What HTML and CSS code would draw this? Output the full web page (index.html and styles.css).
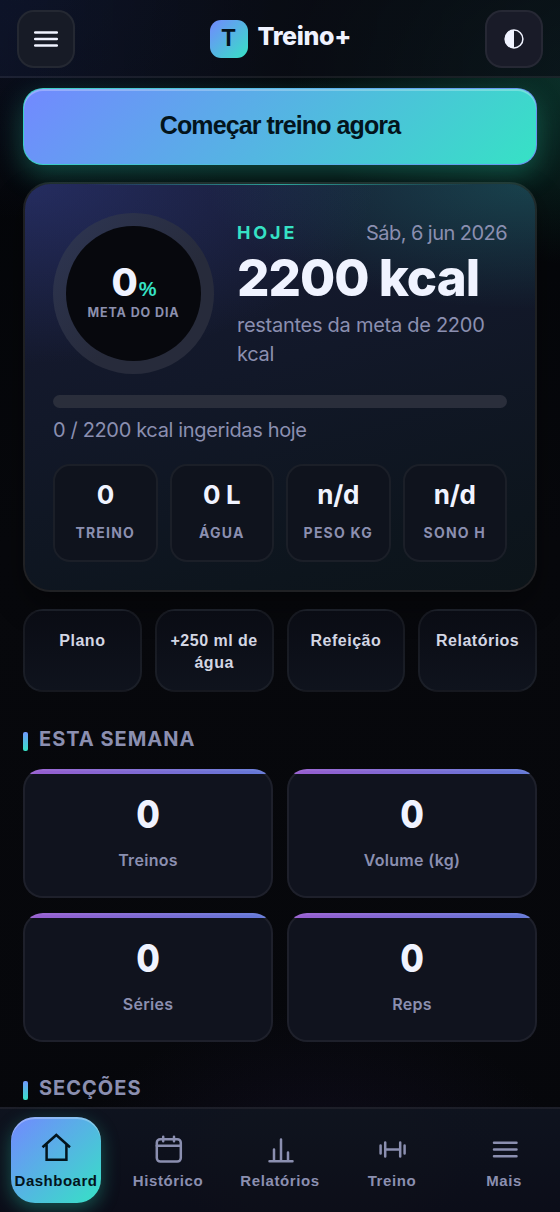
FILE: index.html
```html
<!DOCTYPE html>
<html lang="pt">
<head>
<meta charset="utf-8">
<meta name="viewport" content="width=device-width, initial-scale=1">
<title>Treino+</title>
<link rel="stylesheet" href="styles.css">
</head>
<body>
<div class="app">
  <header class="topbar">
    <button class="icon-btn" aria-label="Menu">
      <svg width="24" height="18" viewBox="0 0 24 18"><path d="M1.2 2.5H22.8M1.2 9H22.8M1.2 15.5H22.8" stroke="currentColor" stroke-width="2.5" stroke-linecap="round"/></svg>
    </button>
    <div class="brand"><span class="logo">T</span><span class="brand-name">Treino+</span></div>
    <button class="icon-btn theme" aria-label="Tema">
      <svg width="20" height="20" viewBox="0 0 20 20"><circle cx="10" cy="10" r="8.9" fill="none" stroke="currentColor" stroke-width="1.5"/><path d="M10 1A9 9 0 0 0 10 19Z" fill="currentColor"/></svg>
    </button>
  </header>

  <main class="content">
    <button class="cta"><span>Começar treino agora</span></button>

    <section class="hero">
      <div class="hero-top">
        <div class="ring">
          <div class="ring-hole">
            <div class="ring-value">0<small>%</small></div>
            <div class="ring-label">META DO DIA</div>
          </div>
        </div>
        <div class="summary">
          <div class="summary-head"><span class="today">HOJE</span><span class="date">Sáb, 6 jun 2026</span></div>
          <div class="kcal">2200 kcal</div>
          <p class="remaining">restantes da meta de 2200 kcal</p>
        </div>
      </div>
      <div class="progress"></div>
      <div class="eaten">0 / 2200 kcal ingeridas hoje</div>
      <div class="tiles">
        <div class="tile"><b>0</b><span>TREINO</span></div>
        <div class="tile"><b>0 L</b><span>ÁGUA</span></div>
        <div class="tile"><b>n/d</b><span>PESO KG</span></div>
        <div class="tile"><b>n/d</b><span>SONO H</span></div>
      </div>
    </section>

    <div class="quick">
      <button>Plano</button>
      <button>+250 ml de água</button>
      <button>Refeição</button>
      <button>Relatórios</button>
    </div>

    <h2 class="section-title">ESTA SEMANA</h2>
    <div class="stats">
      <div class="stat"><b>0</b><span>Treinos</span></div>
      <div class="stat"><b>0</b><span>Volume (kg)</span></div>
      <div class="stat"><b>0</b><span>Séries</span></div>
      <div class="stat"><b>0</b><span>Reps</span></div>
    </div>
    <h2 class="section-title sections">SECÇÕES</h2>
  </main>

  <nav class="tabbar">
    <a class="tab active">
      <svg width="30" height="30" viewBox="0 0 30 30"><path d="M1.5 15.3 15.3 3 29 15.3M5.6 12.5V27.8H25.4V12.5" /></svg>
      <span>Dashboard</span>
    </a>
    <a class="tab">
      <svg width="30" height="30" viewBox="0 0 30 30"><rect x="3.8" y="5.2" width="24" height="22.4" rx="3.5"/><path d="M3.8 11.8H27.8M10.2 2.8V7.2M21 2.8V7.2"/></svg>
      <span>Histórico</span>
    </a>
    <a class="tab">
      <svg width="30" height="30" viewBox="0 0 30 30"><path d="M4.5 27.2H27.5M9 27V15.5M16 27V5.5M23 27V18.5"/></svg>
      <span>Relatórios</span>
    </a>
    <a class="tab">
      <svg width="30" height="30" viewBox="0 0 30 30"><path d="M3.6 11.5V19.5M8.2 8.5V22.5M23.2 8.5V22.5M27.6 11.5V19.5M8.2 15.5H23.2"/></svg>
      <span>Treino</span>
    </a>
    <a class="tab">
      <svg width="30" height="30" viewBox="0 0 30 30"><path d="M5 8.8H27.5M5 15.5H27.5M5 22.3H27.5"/></svg>
      <span>Mais</span>
    </a>
  </nav>
</div>
</body>
</html>
```

FILE: styles.css
```css
:root {
  --text: #f0f3ff;
  --muted: #8b8fb0;
  --mint: #36e2c5;
  --blue: #7289ff;
}
* { box-sizing: border-box; }
body {
  margin: 0;
  background: #06070b;
  color: var(--text);
  font-family: Inter, "Liberation Sans", sans-serif;
}
button { font-family: "Liberation Sans", Arial, sans-serif; margin: 0; }
b, span, small { white-space: nowrap; }
.app {
  width: 560px;
  height: 1212px;
  overflow: hidden;
  display: flex;
  flex-direction: column;
  background:
    radial-gradient(300px 190px at 590px 75px, rgba(24, 130, 104, 0.36), transparent),
    radial-gradient(340px 240px at 30px -20px, rgba(44, 62, 140, 0.22), transparent),
    radial-gradient(240px 150px at 320px 1160px, rgba(42, 30, 80, 0.22), transparent),
    linear-gradient(#030508, #07080c 45%, #06070b);
}

/* Top bar */
.topbar {
  flex: none;
  height: 78px;
  padding: 0 17px;
  display: flex;
  align-items: center;
  justify-content: space-between;
  border-bottom: 2px solid rgba(255, 255, 255, 0.065);
  background: linear-gradient(90deg, rgba(15, 22, 45, 0.6), rgba(10, 13, 21, 0.8) 50%, rgba(10, 14, 22, 0.75));
}
.icon-btn {
  width: 58px;
  height: 58px;
  margin-top: 2px;
  border: 2px solid rgba(255, 255, 255, 0.06);
  border-radius: 17px;
  background: #171b26;
  color: var(--text);
  display: grid;
  place-items: center;
  padding: 0;
}
.icon-btn.theme { background: #191b28; }
.icon-btn.theme svg { margin-top: -1px; }
.brand { display: flex; align-items: center; gap: 10px; }
.logo {
  width: 38px;
  height: 38px;
  margin-top: 1px;
  border-radius: 11px;
  background: linear-gradient(135deg, var(--blue), var(--mint));
  color: #04121c;
  font-family: "Liberation Sans", Arial, sans-serif;
  font-size: 23px;
  font-weight: 700;
  line-height: 36px;
  text-align: center;
}
.brand-name { font-size: 25px; font-weight: 800; line-height: 30px; letter-spacing: -0.35px; margin-top: -4px; width: 93px; }

/* Main column */
.content {
  flex: 1;
  min-height: 0;
  overflow: hidden;
  padding: 10px 23px 0;
}
.cta {
  display: flex;
  width: 514px;
  height: 77px;
  padding: 0 0 2px;
  align-items: center;
  justify-content: center;
  border: 1px solid transparent;
  border-radius: 20px;
  background: linear-gradient(135deg, var(--blue), var(--mint)) padding-box, linear-gradient(90deg, #39cfc3, #58b9e8 50%, #6992f0) border-box;
  box-shadow: 0 10px 28px rgba(40, 210, 170, 0.32), inset 0 2px 0 rgba(255, 255, 255, 0.27);
  color: #03141c;
  font-size: 25px;
  font-weight: 700;
  letter-spacing: -0.9px;
}
.hero {
  height: 410px;
  margin-top: 17px;
  padding: 29px 28px 0;
  border: 2px solid rgba(255, 255, 255, 0.1);
  border-radius: 27px;
  background:
    linear-gradient(90deg, transparent 12%, rgba(54, 226, 197, 0.65) 50%, transparent 88%) top / 100% 1px no-repeat,
    radial-gradient(350px 180px at 0 0, rgba(70, 90, 210, 0.28), transparent),
    radial-gradient(330px 125px at 100% 0, rgba(32, 150, 140, 0.32), transparent),
    linear-gradient(165deg, #181b34, #121829 45%, #0d151d 85%, #0c1419);
  background-clip: padding-box;
  box-shadow: 0 14px 30px rgba(0, 0, 0, 0.4);
}
.hero-top { display: flex; gap: 23px; height: 162px; }
.ring {
  flex: none;
  width: 161px;
  height: 161px;
  border-radius: 50%;
  padding: 13px;
  background: linear-gradient(135deg, #2e3654, #272b3b 60%);
}
.ring-hole {
  height: 135px;
  border-radius: 50%;
  background: #07080d;
  text-align: center;
  padding-top: 36px;
}
.ring-value { font-size: 38px; font-weight: 800; line-height: 40px; letter-spacing: -1px; }
.ring-value small { font: 700 20px "Liberation Sans", sans-serif; color: var(--mint); margin-left: 2px; }
.ring-label { font-size: 12.5px; font-weight: 700; line-height: 20px; letter-spacing: 0.9px; color: #8c90ae; margin: 1px -5px 0; white-space: nowrap; }
.summary { flex: 1; min-width: 0; padding-top: 5px; }
.summary-head { display: flex; justify-content: space-between; line-height: 30px; height: 30px; }
.today { font-size: 18px; font-weight: 700; color: var(--mint); letter-spacing: 2.9px; }
.date { font-size: 20px; color: var(--muted); letter-spacing: -0.55px; }
.kcal { font-size: 51px; font-weight: 800; line-height: 60px; letter-spacing: -1px; white-space: nowrap; }
.remaining { margin: 3px 0 0; font-size: 20px; line-height: 29px; color: var(--muted); letter-spacing: -0.27px; }
.progress { height: 13px; margin-top: 20px; border-radius: 7px; background: #2a2e3b; }
.eaten { height: 30px; margin-top: 7px; line-height: 30px; font-size: 20px; letter-spacing: -0.35px; color: var(--muted); white-space: nowrap; }
.tiles { display: grid; grid-template-columns: repeat(4, 1fr); gap: 12px; margin-top: 19px; }
.tile {
  height: 98px;
  border: 2px solid rgba(255, 255, 255, 0.05);
  border-radius: 17px;
  background: #0f131d;
  display: flex;
  flex-direction: column;
  align-items: center;
  padding-top: 13px;
}
.tile b { font-size: 26px; font-weight: 700; line-height: 32px; letter-spacing: -0.3px; }
.tile span { margin-top: 12px; font-size: 14px; font-weight: 700; line-height: 20px; letter-spacing: 1.2px; color: var(--muted); }

.quick { display: grid; grid-template-columns: repeat(4, 1fr); gap: 13px; margin-top: 17px; }
.quick button {
  height: 83px;
  border: 2px solid rgba(255, 255, 255, 0.05);
  border-radius: 20px;
  background: linear-gradient(#0a0c14, #0f131d);
  color: #d3d6e3;
  font-size: 16px;
  font-weight: 700;
  line-height: 22px;
  letter-spacing: 0.5px;
  padding: 19px 9px 0;
  display: flex;
  justify-content: center;
}
.section-title {
  display: flex;
  align-items: center;
  gap: 11px;
  height: 20px;
  margin: 37px 0 20px;
  font-size: 20px;
  font-weight: 700;
  line-height: 20px;
  letter-spacing: 1px;
  color: var(--muted);
}
.section-title::before {
  content: "";
  width: 5px;
  height: 19px;
  margin-top: 5px;
  border-radius: 2px;
  background: linear-gradient(#7199ff, var(--mint));
}
.section-title.sections { margin: 36px 0 0; }
.stats { display: grid; grid-template-columns: repeat(2, 1fr); gap: 15px 14px; }
.stat {
  height: 129px;
  border: 2px solid rgba(255, 255, 255, 0.06);
  border-radius: 20px;
  background:
    linear-gradient(90deg, #985dd0, #6279d8) top / 100% 5px no-repeat border-box,
    #10131e;
  display: flex;
  flex-direction: column;
  align-items: center;
  padding-top: 21px;
}
.stat b { font-size: 38px; font-weight: 800; line-height: 44px; transform: scaleX(0.9); }
.stat span { margin-top: 12px; font-size: 16px; font-weight: 600; line-height: 24px; letter-spacing: 0.3px; color: var(--muted); }

/* Bottom tab bar */
.tabbar {
  flex: none;
  height: 105px;
  border-top: 2px solid rgba(255, 255, 255, 0.07);
  background: linear-gradient(rgba(15, 20, 31, 0.95), rgba(12, 14, 25, 0.95));
  display: grid;
  grid-template-columns: repeat(5, 112px);
  justify-items: center;
  align-items: start;
  padding-top: 8px;
}
.tab {
  width: 90px;
  height: 86px;
  border-radius: 24px;
  display: flex;
  flex-direction: column;
  align-items: center;
  padding-top: 17px;
  color: var(--muted);
  font: 700 15px/20px "Liberation Sans", Arial, sans-serif;
  letter-spacing: 0.6px;
}
.tab svg { flex: none; fill: none; stroke: currentColor; stroke-width: 2.5; stroke-linecap: round; }
.tab span { margin-top: 7px; }
.tab.active {
  color: #03141c;
  background: linear-gradient(135deg, var(--blue), var(--mint));
  box-shadow: 0 6px 18px rgba(42, 215, 180, 0.34), inset 0 2px 0 rgba(255, 255, 255, 0.27);
  padding-top: 15px;
  letter-spacing: 0.5px;
}
.tab.active svg { stroke-linecap: butt; }
.tab.active span { margin-top: 9px; }
```
